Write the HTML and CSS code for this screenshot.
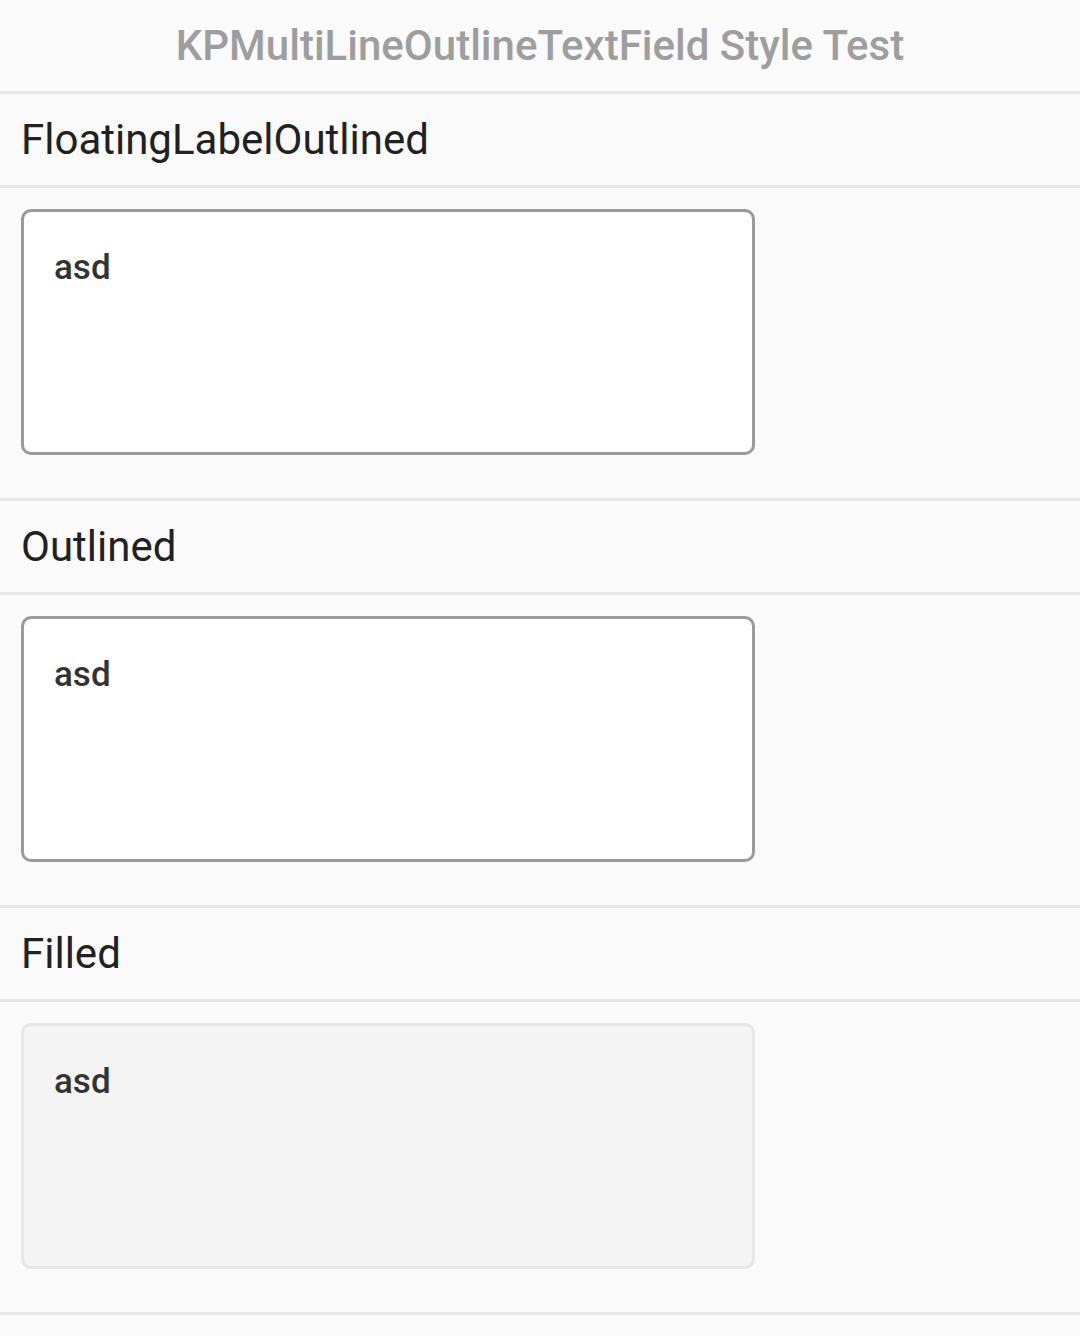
FILE: index.html
```html
<!DOCTYPE html>
<html>
<head>
<meta charset="utf-8">
<link rel="stylesheet" href="styles.css">
</head>
<body>
<div class="page">
  <header class="title-bar">KPMultiLineOutlineTextField Style Test</header>
  <section class="section">
    <div class="section-label">FloatingLabelOutlined</div>
    <div class="section-content">
      <div class="field field-outlined"><span class="field-text">asd</span></div>
    </div>
  </section>
  <section class="section">
    <div class="section-label">Outlined</div>
    <div class="section-content">
      <div class="field field-outlined"><span class="field-text">asd</span></div>
    </div>
  </section>
  <section class="section">
    <div class="section-label">Filled</div>
    <div class="section-content">
      <div class="field field-filled"><span class="field-text">asd</span></div>
    </div>
  </section>
</div>
</body>
</html>
```

FILE: styles.css
```css
html, body {
  margin: 0;
  padding: 0;
  background: #fafafa;
}
body {
  font-family: Roboto, "Noto Sans", sans-serif;
  width: 1080px;
  height: 1336px;
  overflow: hidden;
}
.page {
  display: flex;
  flex-direction: column;
}
.title-bar {
  height: 91px;
  line-height: 91px;
  text-align: center;
  font-size: 42px;
  font-weight: 500;
  color: #9e9e9e;
  border-bottom: 3px solid #e6e6e6;
}
.section-label {
  height: 91px;
  line-height: 91px;
  padding-left: 21px;
  font-size: 42px;
  font-weight: 400;
  color: #212121;
  border-bottom: 3px solid #e6e6e6;
}
.section-content {
  padding: 21px 21px 43px 21px;
  border-bottom: 3px solid #e6e6e6;
}
.field {
  box-sizing: border-box;
  width: 734px;
  height: 246px;
  border-radius: 10px;
  padding: 36px 0 0 30px;
}
.field-outlined {
  background: #ffffff;
  border: 3px solid #9a9a9a;
}
.field-filled {
  background: #f4f4f4;
  border: 3px solid #e6e6e6;
}
.field-text {
  display: block;
  font-size: 35px;
  line-height: 40px;
  font-weight: 500;
  color: #333333;
}
```
